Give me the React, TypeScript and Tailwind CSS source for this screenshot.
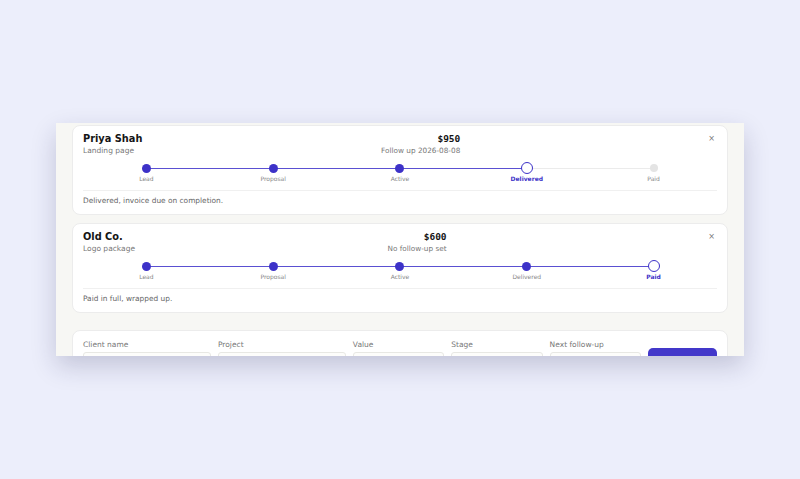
import React from "react";

const STAGES = ["Lead", "Proposal", "Active", "Delivered", "Paid"];

interface Deal {
  client: string;
  project: string;
  value: string;
  followUp: string;
  stage: number;
  note: string;
}

const deals: Deal[] = [
  {
    client: "Priya Shah",
    project: "Landing page",
    value: "$950",
    followUp: "Follow up 2026-08-08",
    stage: 3,
    note: "Delivered, invoice due on completion.",
  },
  {
    client: "Old Co.",
    project: "Logo package",
    value: "$600",
    followUp: "No follow-up set",
    stage: 4,
    note: "Paid in full, wrapped up.",
  },
];

function Stepper({ stage }: { stage: number }) {
  const filled = (stage / (STAGES.length - 1)) * 80;
  return (
    <div className="relative mt-[5px]">
      <div className="absolute left-[10%] right-[10%] top-[5.5px] h-[1.2px] bg-[#ebebeb]" />
      <div
        className="absolute left-[10%] top-[5.5px] h-[1.2px] bg-[#5a50d2]"
        style={{ width: `${filled}%` }}
      />
      <div className="relative grid grid-cols-5">
        {STAGES.map((s, i) => (
          <div key={s} className="flex flex-col items-center">
            <div className="flex h-[12px] items-center justify-center">
              {i < stage && <div className="h-[9px] w-[9px] rounded-full bg-[#3d32c8]" />}
              {i === stage && (
                <div className="h-[12px] w-[12px] rounded-full border-[1.5px] border-[#3d32c8] bg-white" />
              )}
              {i > stage && <div className="h-[8px] w-[8px] rounded-full bg-[#e4e4e4]" />}
            </div>
            <span
              className={
                i === stage
                  ? "mt-[1px] text-[6px] leading-[8px] font-bold text-[#3d32c8]"
                  : "mt-[1px] text-[6px] leading-[8px] text-[#888]"
              }
            >
              {s}
            </span>
          </div>
        ))}
      </div>
    </div>
  );
}

function DealCard({ deal }: { deal: Deal }) {
  return (
    <div className="rounded-[8px] border border-[#ececec] bg-white px-[10px] pt-[7px] pb-[8px]">
      <div className="flex items-start justify-between">
        <div>
          <div className="text-[9.8px] leading-[12px] font-bold text-[#151515]">{deal.client}</div>
          <div className="text-[7.5px] leading-[12px] text-[#777]">{deal.project}</div>
        </div>
        <div className="text-right">
          <div className="font-['DejaVu_Sans_Mono',monospace] text-[9.5px] leading-[12px] font-bold text-[#151515]">
            {deal.value}
          </div>
          <div className="text-[7.3px] leading-[12px] text-[#777]">{deal.followUp}</div>
        </div>
        <button className="flex w-[18px] justify-end pr-[2px] text-[8px] leading-[12px] text-[#777]">×</button>
      </div>
      <Stepper stage={deal.stage} />
      <div className="mt-[7px] border-t border-[#f0f0f0] pt-[5px] text-[7.4px] leading-[10px] text-[#666]">
        {deal.note}
      </div>
    </div>
  );
}

function Field({ label }: { label: string }) {
  return (
    <div className="flex flex-col gap-[2px]">
      <span className="text-[7.5px] leading-[10px] text-[#777]">{label}</span>
      <div className="h-[18px] rounded-[3px] border border-[#e8e8e4] bg-[#fdfdfb]" />
    </div>
  );
}

export default function App() {
  return (
    <div className="flex h-[479px] w-full items-center justify-center bg-[#eceefb] font-['DejaVu_Sans',sans-serif]">
      <div className="h-[233px] w-[688px] overflow-hidden bg-[#f7f7f4] px-[16px] pt-[2px] shadow-[0_10px_24px_rgba(30,32,80,0.2)]">
        <div className="flex flex-col gap-[8px]">
          {deals.map((d) => (
            <DealCard key={d.client} deal={d} />
          ))}
        </div>
        <div className="mt-[17px] rounded-[8px] border border-[#ececec] bg-white px-[10px] pt-[9px] pb-[10px]">
          <div className="grid grid-cols-[1.4fr_1.4fr_1fr_1fr_1fr_69px] items-end gap-[7px]">
            <Field label="Client name" />
            <Field label="Project" />
            <Field label="Value" />
            <Field label="Stage" />
            <Field label="Next follow-up" />
            <button aria-label="Add deal" className="h-[22px] rounded-[5px] bg-[#4338ca]" />
          </div>
        </div>
      </div>
    </div>
  );
}
